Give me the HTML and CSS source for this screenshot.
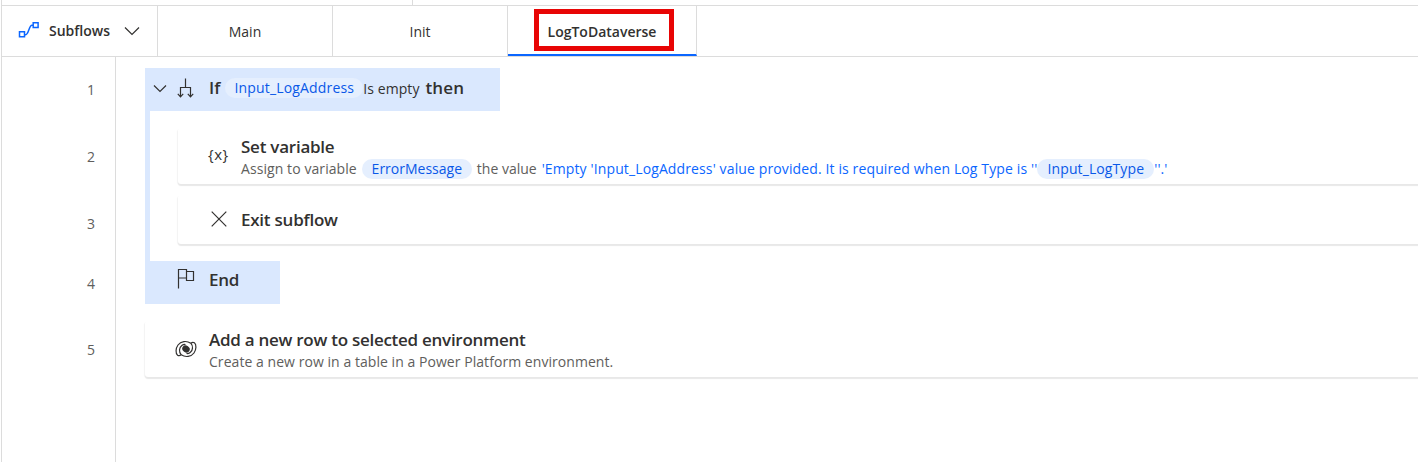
FILE: index.html
```html
<!DOCTYPE html>
<html lang="en"><head><meta charset="utf-8"><title>Subflows</title><link rel="stylesheet" href="styles.css"></head>
<body>
<div class="top-strip"><div class="strip-cell"></div></div>
<div class="designer">
<nav class="tabs">
<div class="subflows">
<svg class="flow-icon" width="22" height="18" viewBox="0 0 22 18"><path d="M1.500 10.800h5v4.900h-5zM15.200 1.800h4.900v4.800h-4.900zM6.500 13.700h1.200c3 0 3.200-9.400 6.300-9.400h1.200"/></svg>
<span class="subflows-label">Subflows</span>
<svg class="chevron" width="16" height="10" viewBox="0 0 16 10"><path d="M1 1.500l7 7 7-7"/></svg>
</div>
<div class="tab"><span>Main</span></div>
<div class="tab"><span>Init</span></div>
<div class="tab active"><span class="highlight"><span class="tab-name">LogToDataverse</span></span></div>
</nav>
<main class="workspace">
<ol class="gutter"><li class="n1">1</li><li class="n2">2</li><li class="n3">3</li><li class="n4">4</li><li class="n5">5</li></ol>
<section class="canvas">
<div class="block-head">
<svg class="collapse" width="14" height="9" viewBox="0 0 14 9"><path d="M1 1.500l6 6 6-6"/></svg>
<svg class="branch" width="18" height="21" viewBox="0 0 18 21"><path d="M8.500 0.500v9M3.500 18.500v-9h10v9M0.800 15.800l2.700 3 2.700-3M10.800 15.800l2.700 3 2.700-3"/></svg>
<b class="kw-if">If</b><span class="chip chip-address">Input_LogAddress</span><span class="operator">Is empty</span><b class="kw-then">then</b>
</div>
<div class="block-body">
<article class="card set-card">
<span class="var-icon">{x}</span>
<div><h3>Set variable</h3>
<p class="desc"><span class="assign">Assign to variable</span><span class="chip chip-error">ErrorMessage</span><span>the value</span><span class="literal">'Empty 'Input_LogAddress' value provided. It is required when Log Type is ''</span><span class="chip chip-type">Input_LogType</span><span class="literal-end">''.'</span></p></div>
</article>
<article class="card exit-card">
<svg class="cross" width="16" height="16" viewBox="0 0 16 16"><path d="M.7.700l14.600 14.600M15.300.700L.7 15.300"/></svg>
<h3>Exit subflow</h3>
</article>
</div>
<div class="block-end">
<svg class="flag" width="18" height="21" viewBox="0 0 18 21"><path d="M1.500 20.500V1.500h8v8.500h-8M9.500 3.500h7v9h-7V10"/></svg>
<h3 class="end-title">End</h3>
</div>
<article class="card row-card">
<svg class="dataverse" width="22" height="18" viewBox="0 0 22 18"><path d="M15.800 3.200C11.500.3 5.800 1.200 3 5 .6 8.300.4 13.500 2.600 15.200c1.300.9 2.800.2 3.600-.4M6.200 14.800c4.300 2.900 10 2 12.800-1.800 2.400-3.300 2.600-8.500.4-10.200-1.300-.9-2.800-.2-3.600.4M6.200 14.800C3.700 12 4 7.600 6.800 5.500c1.200-.9 2.500-1.200 3.700-1M15.800 3.200c2.500 2.800 2.200 7.200-.6 9.300-1.200.9-2.500 1.200-3.700 1"/><ellipse cx="11" cy="9" rx="3.900" ry="3.300" transform="rotate(35 11 9)"/></svg>
<div><h3 class="row-title">Add a new row to selected environment</h3><p class="desc row-desc">Create a new row in a table in a Power Platform environment.</p></div>
</article>
</section>
</main>
</div>
</body></html>
```
FILE: styles.css
```css
* { box-sizing: border-box; }
body { margin: 0; width: 1418px; height: 462px; overflow: hidden; background: #fff; color: #323130; font: 14px/20px "Open Sans", "Noto Sans", sans-serif; }
h3, p, ol { margin: 0; padding: 0; }
span, b, h3 { white-space: nowrap; }
svg { display: block; flex: none; fill: none; stroke: #323130; stroke-width: 1.200; }
.top-strip { height: 5px; padding-left: 1px; }
.strip-cell { width: 412px; height: 5px; border-left: 1px solid #dcdcdc; border-right: 1px solid #dcdcdc; }
.designer { height: 457px; margin-left: 1px; border-left: 1px solid #dcdcdc; }
.tabs { display: flex; height: 52px; border-top: 1px solid #dcdcdc; border-bottom: 1px solid #dcdcdc; }
.subflows { width: 156px; display: flex; align-items: center; padding: 0 0 0 16px; border-right: 1px solid #dcdcdc; }
.flow-icon { stroke: #0b66ff; stroke-width: 1.500; margin-bottom: 2px; }
.subflows-label { margin-left: 9px; font-weight: 600; }
.chevron { margin-left: auto; margin-right: 17px; margin-bottom: 1px; }
.tab { width: 175px; display: flex; align-items: center; justify-content: center; padding-top: 2px; border-right: 1px solid #dcdcdc; }
.tab.active { width: 189px; height: 50px; border-bottom: 2px solid #0b66ff; font-weight: 600; align-items: flex-start; padding-top: 3px; }
.highlight { display: flex; align-items: center; justify-content: center; width: 140px; height: 42px; border: 5px solid #e80505; margin-left: 3px; padding: 3px 3px 0 0; }
.workspace { display: flex; height: 405px; }
.gutter { width: 114px; border-right: 1px solid #dcdcdc; list-style: none; text-align: right; padding: 23px 20px 0 0; color: #605e5c; }
.gutter li { height: 67px; }
.gutter .n3 { height: 60px; }
.gutter .n4 { height: 66px; }
.canvas { flex: 1; padding: 11px 0 0 29px; }
.block-head { width: 355px; height: 43px; background: #dae8fe; display: flex; align-items: center; padding: 0 0 3px 8px; }
.branch { margin-left: 10px; }
.kw-if, .kw-then { font-size: 17px; font-weight: 600; }
.kw-if { margin-left: 14px; }
.chip { display: inline-flex; align-items: center; justify-content: center; height: 20px; border-radius: 10px; background: #e5effe; color: #0958e8; }
.chip-address { width: 138px; margin-left: 5px; letter-spacing: .16px; }
.operator { padding-top: 2px; letter-spacing: .07px; }
.kw-then { margin-left: 6px; letter-spacing: .1px; }
.block-body { border-left: 5px solid #dae8fe; height: 150px; padding: 17px 0 0 28px; }
.card { background: #fff; display: flex; border-radius: 3px; box-shadow: 0 2px 1px #e8e8e8, -1px 1px 1px #f5f5f5; margin-right: -4px; }
h3 { font-size: 17px; line-height: 24px; font-weight: 600; letter-spacing: -.24px; }
.set-card { height: 56px; padding: 7px 0 0 30px; }
.var-icon { width: 33px; padding-top: 9px; font-size: 15px; letter-spacing: .5px; }
.desc { color: #605e5c; display: flex; height: 20px; }
.assign { letter-spacing: .08px; }
.chip-error { width: 110px; margin: 0 5px; }
.literal, .literal-end { color: #0b66ff; }
.literal { margin-left: 5px; letter-spacing: .122px; }
.chip-type { width: 117px; letter-spacing: .1px; }
.exit-card { height: 49px; margin-top: 11px; padding: 13px 0 0 33px; }
.cross { margin-right: 14px; margin-top: 3px; }
.block-end { width: 135px; height: 43px; background: #dae8fe; display: flex; padding: 7px 0 0 32px; }
.end-title { margin-left: 14px; }
.row-card { height: 56px; margin-top: 17px; padding: 7px 0 0 30px; }
.row-title { letter-spacing: -.27px; }
.row-desc { letter-spacing: .05px; }
.dataverse { margin: 12px 12px 0 0; }
.dataverse ellipse { fill: #323130; stroke: none; }
```
